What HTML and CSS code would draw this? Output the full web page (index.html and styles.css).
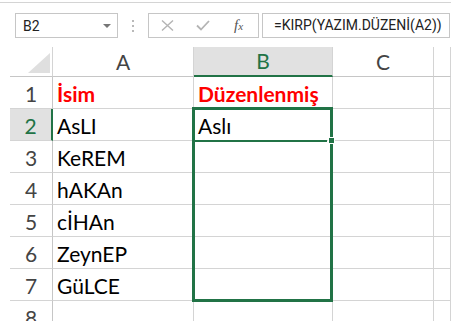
FILE: index.html
```html
<!DOCTYPE html>
<html lang="tr">
<head>
    <meta charset="UTF-8">
    <title>KIRP ve YAZIM.DÜZENİ</title>
    <link rel="stylesheet" href="styles.css">
</head>
<body>

<!-- Formül çubuğu -->
<div class="formula-bar">
    <div class="name-box">
        <span>B2</span>
        <span class="caret"></span>
    </div>
    <div class="dots"><i></i><i></i><i></i></div>
    <div class="fx-box">
        <svg width="13" height="11" viewBox="0 0 13 11"><path d="M1 0.5 L12 10.5 M12 0.5 L1 10.5" stroke="#b4b4b4" stroke-width="1.4" fill="none"/></svg>
        <svg width="14" height="11" viewBox="0 0 14 11"><path d="M1 5.5 L5 9.5 L13 1" stroke="#b4b4b4" stroke-width="1.8" fill="none"/></svg>
        <span class="fx">f<small>x</small></span>
    </div>
    <div class="formula">=KIRP(YAZIM.DÜZENİ(A2))</div>
</div>

<!-- Sayfa -->
<div class="sheet">
    <div class="corner"></div>
    <div class="ch">A</div>
    <div class="ch active">B</div>
    <div class="ch">C</div>
    <div class="ch"></div>

    <div class="rh">1</div>
    <div class="cell title">İsim</div>
    <div class="cell title">Düzenlenmiş</div>
    <div class="cell"></div>
    <div class="cell"></div>

    <div class="rh active">2</div>
    <div class="cell">AsLI</div>
    <div class="cell">Aslı</div>
    <div class="cell"></div>
    <div class="cell"></div>

    <div class="rh">3</div>
    <div class="cell">KeREM</div>
    <div class="cell"></div>
    <div class="cell"></div>
    <div class="cell"></div>

    <div class="rh">4</div>
    <div class="cell">hAKAn</div>
    <div class="cell"></div>
    <div class="cell"></div>
    <div class="cell"></div>

    <div class="rh">5</div>
    <div class="cell">cİHAn</div>
    <div class="cell"></div>
    <div class="cell"></div>
    <div class="cell"></div>

    <div class="rh">6</div>
    <div class="cell">ZeynEP</div>
    <div class="cell"></div>
    <div class="cell"></div>
    <div class="cell"></div>

    <div class="rh">7</div>
    <div class="cell">GüLCE</div>
    <div class="cell"></div>
    <div class="cell"></div>
    <div class="cell"></div>

    <div class="rh">8</div>
    <div class="cell"></div>
    <div class="cell"></div>
    <div class="cell"></div>
    <div class="cell"></div>

    <!-- seçili aralık B2:B7 -->
    <div class="selection"></div>
    <div class="active-line"></div>
    <div class="handle"></div>
</div>

</body>
</html>
```

FILE: styles.css
```css
body {
    margin: 0;
    background-color: white;
    font-family: "Lato", sans-serif;
    overflow: hidden;
    height: 321px;
}

/* Formül çubuğu */
.formula-bar {
    border-top: 1px solid #d4d4d4;
    margin-top: 2px;
    height: 45px;
    box-sizing: border-box;
    padding: 10px 0 0 15px;
    display: flex;
    align-items: flex-start;
    font-family: "Roboto", "Liberation Sans", sans-serif;
    font-size: 14px;
    color: #222;
}

.name-box {
    width: 103px;
    height: 25px;
    box-sizing: border-box;
    border: 1px solid #c6c6c6;
    display: flex;
    align-items: center;
    justify-content: space-between;
    padding: 1px 6px 0 7px;
}

.caret {
    width: 0;
    height: 0;
    border-left: 4px solid transparent;
    border-right: 4px solid transparent;
    border-top: 4px solid #767676;
}

.dots {
    width: 30px;
    height: 25px;
    display: flex;
    flex-direction: column;
    align-items: center;
    justify-content: center;
    gap: 3px;
}

.dots i {
    width: 2px;
    height: 2px;
    background-color: #b9b9b9;
}

.fx-box {
    width: 111px;
    height: 25px;
    box-sizing: border-box;
    border: 1px solid #c6c6c6;
    display: flex;
    align-items: center;
    padding-left: 12px;
    gap: 22px;
}

.fx {
    font-family: "Liberation Serif", serif;
    font-style: italic;
    font-size: 15px;
    color: #555;
    margin-left: 2px;
}

.fx small {
    font-size: 11px;
}

.formula {
    width: 188px;
    height: 25px;
    box-sizing: border-box;
    border: 1px solid #c6c6c6;
    margin-left: 3px;
    padding: 3px 0 0 11px;
    white-space: nowrap;
    overflow: hidden;
}

/* Sayfa */
.sheet {
    position: relative;
    margin-left: 10px;
    display: grid;
    grid-template-columns: 43px 141px 139px 101px 1fr;
    grid-template-rows: 30px repeat(8, 32px);
}

.sheet > div {
    box-sizing: border-box;
}

.corner, .ch, .rh, .cell {
    border-right: 1px solid #d4d4d4;
    border-bottom: 1px solid #d4d4d4;
}

.corner {
    border-bottom-color: #c6c6c6;
    position: relative;
}

.corner::after {
    content: "";
    position: absolute;
    right: 2px;
    bottom: 3px;
    width: 0;
    height: 0;
    border-left: 22px solid transparent;
    border-bottom: 20px solid #dfdfdf;
}

.ch {
    border-bottom-color: #c6c6c6;
    text-align: center;
    font-size: 21px;
    line-height: 29px;
    color: #444;
}

.ch.active {
    background-color: #e1e1e1;
    color: #217346;
    border-bottom: 2px solid #217346;
    line-height: 28px;
}

.rh {
    border-right-color: #c6c6c6;
    text-align: center;
    font-size: 21px;
    line-height: 29px;
    padding-top: 2px;
    color: #444;
}

.rh.active {
    background-color: #e1e1e1;
    color: #217346;
    border-right: 2px solid #217346;
}

.cell {
    font-size: 21px;
    line-height: 29px;
    padding: 2px 0 0 4px;
    color: #000;
    white-space: nowrap;
}

.cell.title {
    color: #ff0000;
    font-weight: bold;
}

.selection {
    position: absolute;
    left: 182px;
    top: 60px;
    width: 141px;
    height: 195px;
    border: 3px solid #217346;
}

.active-line {
    position: absolute;
    left: 185px;
    top: 93px;
    width: 132px;
    height: 2px;
    background-color: #217346;
}

.handle {
    position: absolute;
    left: 319px;
    top: 91px;
    width: 5px;
    height: 5px;
    background-color: #217346;
    outline: 1px solid white;
}
```
